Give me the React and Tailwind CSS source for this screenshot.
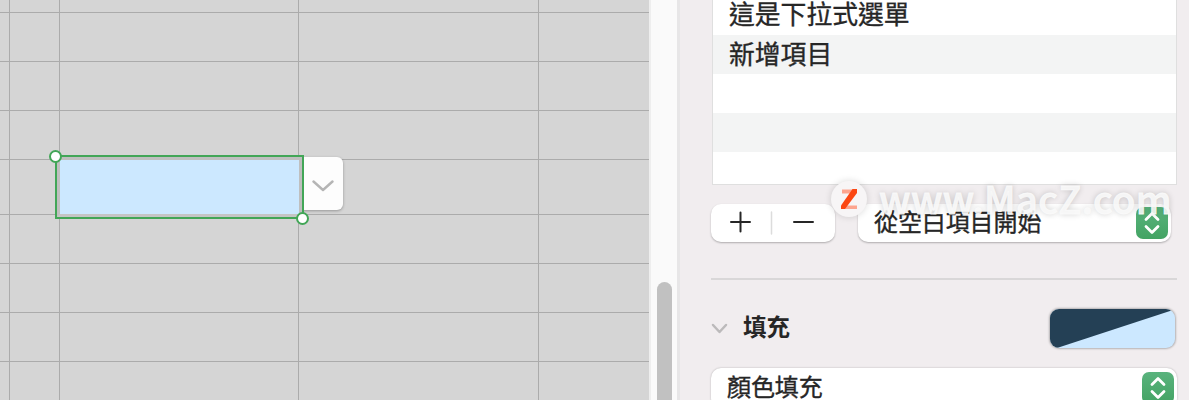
import React from 'react';

const CJK = "font-['Noto_Sans_CJK_TC','Noto_Sans_CJK_SC',sans-serif]";

const rowHeights = ['h-[13px]', 'h-[49px]', 'h-[49px]', 'h-[49px]', 'h-[55px]', 'h-[49px]', 'h-[49px]', 'h-[49px]', 'h-[49px]'];

function Handle({ className }) {
  return <span className={`absolute size-[13px] rounded-full border-2 border-[#42a657] bg-white ${className}`} />;
}

function Sheet() {
  return (
    <section className="relative h-[400px] w-[649px] shrink-0 overflow-hidden bg-[#d5d5d5]">
      {rowHeights.map((height, i) => (
        <div key={i} className={`flex ${height}`}>
          <div className="w-[10px] shrink-0 border-r border-b border-[#ababab]" />
          <div className="w-[50px] shrink-0 border-r border-b border-[#ababab]" />
          <div className={`w-[239px] shrink-0 border-r border-b border-[#ababab] ${i === 4 ? 'bg-[#cce8ff]' : ''}`} />
          <div className="w-[240px] shrink-0 border-r border-b border-[#ababab]" />
          <div className="grow border-b border-[#ababab]" />
        </div>
      ))}
      <button className="absolute top-[157px] left-[294px] flex h-[53px] w-[49px] items-center justify-end rounded-[6px] bg-[#fdfdfd] pr-[9px] shadow-[0_1px_3px_rgba(0,0,0,0.3)]">
        <svg className="mt-[4px]" width="22" height="14" viewBox="0 0 22 14" fill="none" stroke="#b5b5b5" strokeWidth="2.4" strokeLinecap="round" strokeLinejoin="round">
          <path d="M1.5 2.5 11 11 20.5 2.5" />
        </svg>
      </button>
      <div className="absolute top-[155px] left-[55px] h-[64px] w-[249px] border-2 border-[#42a657]">
        <div className="size-full border-t-[3px] border-r-[3px] border-b-[3px] border-l-[3px] border-t-[#bfbfbf] border-r-[#bfbfbf] border-b-[#c5c5c5] border-l-[#bfbfbf] bg-[#cce8ff]" />
        <Handle className="-top-[7px] -left-[8px]" />
        <Handle className="-right-[7px] -bottom-[8px]" />
      </div>
    </section>
  );
}

function Stepper({ className = '' }) {
  return (
    <span className={`flex h-[32px] w-[32px] items-center justify-center rounded-[7px] bg-linear-to-b from-[#59b37d] to-[#43a363] ${className}`}>
      <svg width="32" height="32" viewBox="0 0 32 32" fill="none" stroke="white" strokeWidth="2.8" strokeLinecap="round" strokeLinejoin="round">
        <path d="M10 12.5 16 6.5 22 12.5M10 19.5 16 25.5 22 19.5" />
      </svg>
    </span>
  );
}

function Watermark() {
  return (
    <div className="absolute top-[180px] left-[831px] flex h-[38px] items-center">
      <span className="flex size-[36px] items-center justify-center rounded-full bg-[#f7f5f6] shadow-[0_0_7px_rgba(0,0,0,0.15)]">
        <svg width="18" height="22" viewBox="0 0 18 22">
          <path d="M2 1.5H15V5.5H2ZM4 17.5H17V21H4Z" fill="#fda58f" />
          <path d="M12.5 1H17V5L5 21H1V17.5Z" fill="#fb4713" />
        </svg>
      </span>
      <span className="-mt-[2px] ml-[12px] font-['Noto_Sans_CJK_SC',sans-serif] text-[38px] leading-[38px] font-medium tracking-[0.4px] whitespace-nowrap text-[#fafafa]/90 [-webkit-text-stroke:0.9px_rgba(250,250,250,0.9)] [text-shadow:0_0_6px_rgba(0,0,0,0.22)]">
        www.MacZ.com
      </span>
    </div>
  );
}

export default function App() {
  return (
    <main className={`relative flex h-[400px] w-[1189px] overflow-hidden bg-[#f1edef] text-[#262626] ${CJK}`}>
      <Sheet />
      <div className="flex w-[31px] shrink-0 flex-col items-center border-r-[3px] border-l-2 border-r-[#e7e6e7] border-l-[#eeeeee] bg-[#fafafa] pt-[282px] pl-[1px]">
        <div className="h-[150px] w-[15px] shrink-0 rounded-full bg-[#c1c1c1]" />
      </div>
      <aside className="flex grow flex-col">
        <div className="ml-[32px] h-[185px] w-[465px] shrink-0 overflow-hidden border-x border-b border-[#dfdfdf] bg-white text-[25.8px] [-webkit-text-stroke:0.35px_#262626]">
          <div className="flex h-[35px] items-center pl-[16px] leading-[35px]"><span className="-mt-[10px]">這是下拉式選單</span></div>
          <div className="flex h-[39px] items-center bg-[#f3f4f4] pl-[16px] leading-[39px]"><span className="-mt-[5px]">新增項目</span></div>
          <div className="h-[39px]" />
          <div className="h-[39px] bg-[#f3f4f4]" />
        </div>
        <div className="mt-[19px] ml-[31px] flex h-[38px] shrink-0 gap-[23px]">
          <div className="flex h-[38px] w-[124px] items-center rounded-[10px] bg-white shadow-[0_1px_2px_rgba(0,0,0,0.28)]">
            <svg width="124" height="38" viewBox="0 0 124 38" fill="none" stroke="#262626" strokeWidth="2" strokeLinecap="round">
              <path d="M20 18H39M29.5 8.5V27.5M83 18H102" />
              <path d="M60.5 8V30" stroke="#dcdcdc" strokeWidth="1.5" />
            </svg>
          </div>
          <div className="flex h-[38px] w-[313px] items-center justify-between rounded-[10px] bg-white pr-[3px] pl-[16px] text-[24px] leading-[38px] shadow-[0_1px_2px_rgba(0,0,0,0.28)]">
            <span className="-mt-[4px] tracking-[-0.1px] [-webkit-text-stroke:0.35px_#262626]">從空白項目開始</span>
            <Stepper />
          </div>
        </div>
        <div className="mt-[36px] ml-[31px] h-[2px] w-[466px] shrink-0 bg-[#d9d7d8]" />
        <div className="mt-[29px] ml-[31px] flex h-[40px] w-[466px] shrink-0 items-center">
          <svg className="shrink-0" width="17" height="12" viewBox="0 0 17 12" fill="none" stroke="#bcbabb" strokeWidth="2.5" strokeLinecap="round" strokeLinejoin="round">
            <path d="M2 2 8.5 9 15 2" />
          </svg>
          <span className="-mt-[7px] ml-[15px] text-[23.5px] leading-[38px] font-bold">填充</span>
          <svg className="mr-[2px] mb-[2px] ml-auto rounded-[9px] bg-[#cce8ff] shadow-[0_0_2px_1px_rgba(0,0,0,0.25)]" width="125" height="39" viewBox="0 0 125 39">
            <path d="M0 0H125L120 2 7 39H0Z" fill="#244055" />
          </svg>
        </div>
        <div className="mt-[19px] ml-[31px] flex h-[40px] w-[466px] shrink-0 items-center justify-between rounded-[10px] bg-white pr-[3px] pl-[16px] text-[24px] leading-[40px] shadow-[0_0_2px_rgba(0,0,0,0.28)]">
          <span className="-mt-[5px] tracking-[-0.1px] [-webkit-text-stroke:0.35px_#262626]">顏色填充</span>
          <Stepper />
        </div>
      </aside>
      <Watermark />
    </main>
  );
}
